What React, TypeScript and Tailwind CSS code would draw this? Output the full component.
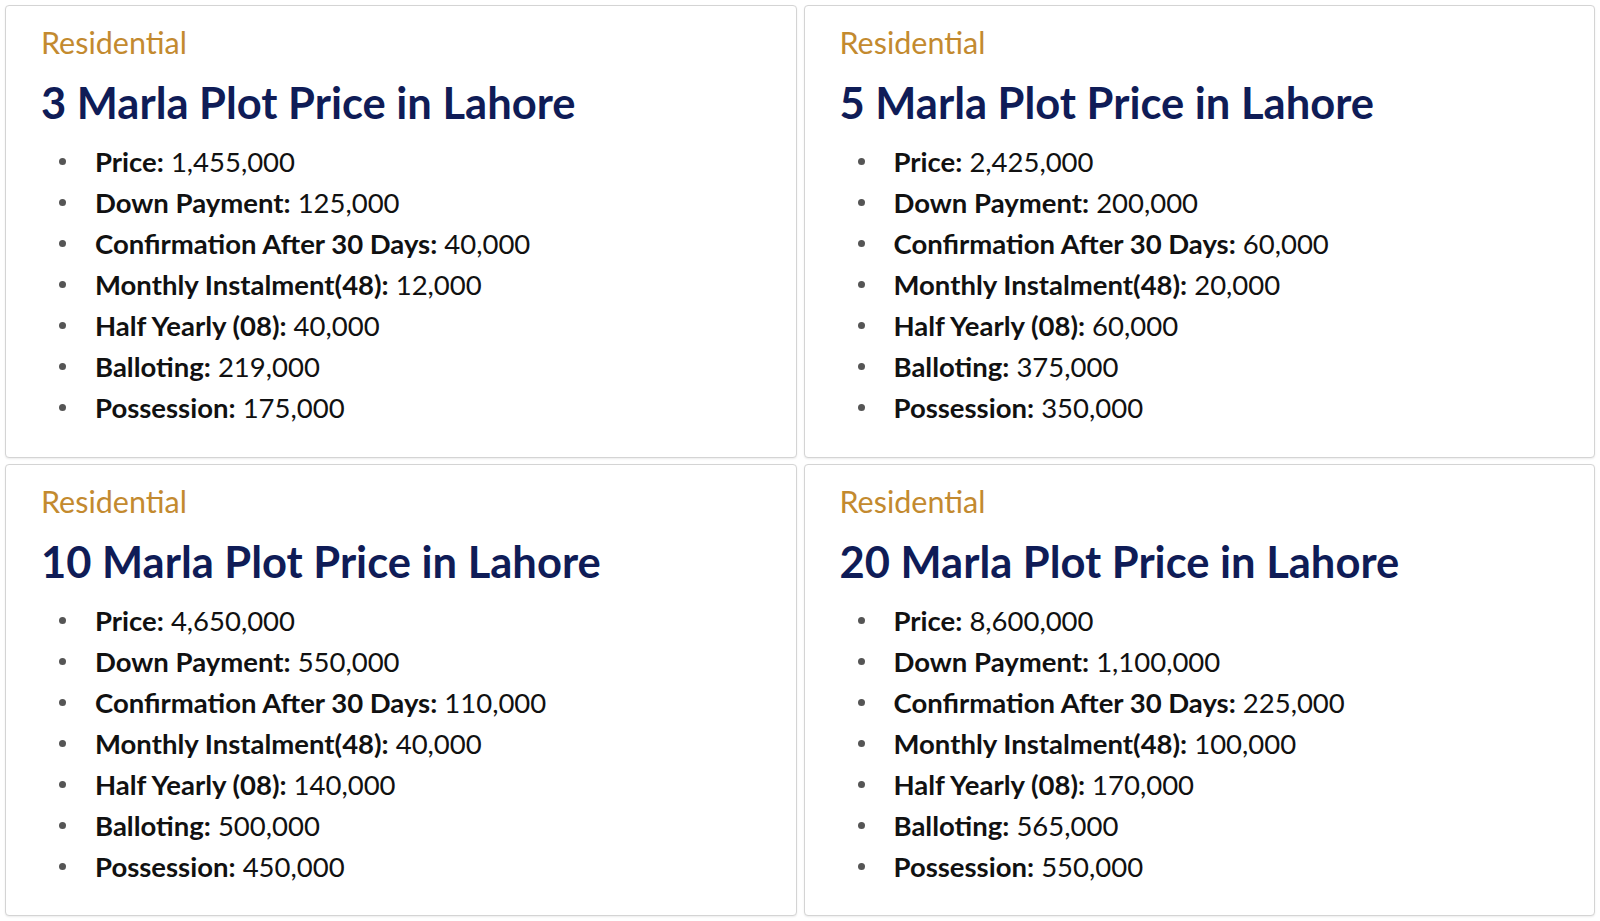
import React from "react"

type Row = { label: string; value: string }
type Plan = { size: string; rows: Row[] }

const plans: Plan[] = [
  {
    size: "3",
    rows: [
      { label: "Price:", value: "1,455,000" },
      { label: "Down Payment:", value: "125,000" },
      { label: "Confirmation After 30 Days:", value: "40,000" },
      { label: "Monthly Instalment(48):", value: "12,000" },
      { label: "Half Yearly (08):", value: "40,000" },
      { label: "Balloting:", value: "219,000" },
      { label: "Possession:", value: "175,000" },
    ],
  },
  {
    size: "5",
    rows: [
      { label: "Price:", value: "2,425,000" },
      { label: "Down Payment:", value: "200,000" },
      { label: "Confirmation After 30 Days:", value: "60,000" },
      { label: "Monthly Instalment(48):", value: "20,000" },
      { label: "Half Yearly (08):", value: "60,000" },
      { label: "Balloting:", value: "375,000" },
      { label: "Possession:", value: "350,000" },
    ],
  },
  {
    size: "10",
    rows: [
      { label: "Price:", value: "4,650,000" },
      { label: "Down Payment:", value: "550,000" },
      { label: "Confirmation After 30 Days:", value: "110,000" },
      { label: "Monthly Instalment(48):", value: "40,000" },
      { label: "Half Yearly (08):", value: "140,000" },
      { label: "Balloting:", value: "500,000" },
      { label: "Possession:", value: "450,000" },
    ],
  },
  {
    size: "20",
    rows: [
      { label: "Price:", value: "8,600,000" },
      { label: "Down Payment:", value: "1,100,000" },
      { label: "Confirmation After 30 Days:", value: "225,000" },
      { label: "Monthly Instalment(48):", value: "100,000" },
      { label: "Half Yearly (08):", value: "170,000" },
      { label: "Balloting:", value: "565,000" },
      { label: "Possession:", value: "550,000" },
    ],
  },
]

function PlanCard({ plan }: { plan: Plan }) {
  return (
    <div className="rounded-[4px] border border-[#d4d4d4] bg-white pl-[35px] pt-[16px] shadow-[0_1px_2px_rgba(0,0,0,0.08)]">
      <p className="text-[30.5px] leading-[40px] text-[#c38a2f]">Residential</p>
      <h2 className="mt-[15px] text-[43.5px] font-bold leading-[50px] text-[#0f1c57]">
        {plan.size} Marla Plot Price in Lahore
      </h2>
      <ul className="mt-[14px]">
        {plan.rows.map((row) => (
          <li key={row.label} className="flex items-center text-[27.5px] leading-[41px] text-[#111]">
            <span className="ml-[18px] mr-[29px] h-[7px] w-[7px] rounded-full bg-[#555]" />
            <span>
              <b className="font-bold">{row.label}</b> {row.value}
            </span>
          </li>
        ))}
      </ul>
    </div>
  )
}

export default function App() {
  return (
    <div className="grid h-[921px] grid-cols-2 grid-rows-2 gap-x-[7px] gap-y-[6px] bg-white p-[5px] font-['Lato',sans-serif]">
      {plans.map((plan) => (
        <PlanCard key={plan.size} plan={plan} />
      ))}
    </div>
  )
}
